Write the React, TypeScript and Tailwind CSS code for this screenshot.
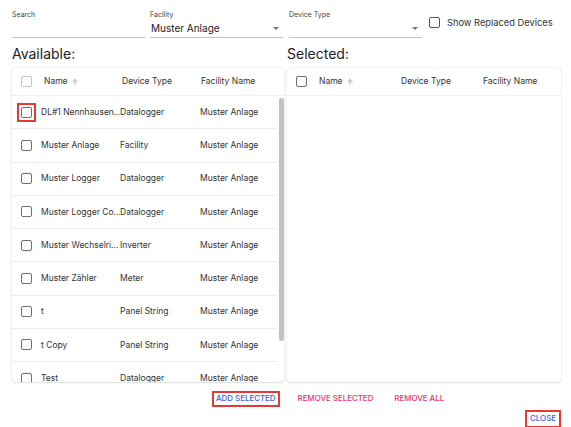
import { ArrowUp } from "lucide-react"

interface Device {
  name: string
  type: string
  facility: string
}

const devices: Device[] = [
  { name: 'DL#1 Nennhausen...', type: 'Datalogger', facility: 'Muster Anlage' },
  { name: 'Muster Anlage', type: 'Facility', facility: 'Muster Anlage' },
  { name: 'Muster Logger', type: 'Datalogger', facility: 'Muster Anlage' },
  { name: 'Muster Logger Co...', type: 'Datalogger', facility: 'Muster Anlage' },
  { name: 'Muster Wechselri...', type: 'Inverter', facility: 'Muster Anlage' },
  { name: 'Muster Zähler', type: 'Meter', facility: 'Muster Anlage' },
  { name: 't', type: 'Panel String', facility: 'Muster Anlage' },
  { name: 't Copy', type: 'Panel String', facility: 'Muster Anlage' },
  { name: 'Test', type: 'Datalogger', facility: 'Muster Anlage' },
]

const Checkbox = ({ light, focused }: { light?: boolean, focused?: boolean }) => {
  const box = (
    <span className={`block w-[11px] h-[11px] rounded-[2px] border-[1.5px] ${light ? 'border-[#c2c2c2]' : 'border-[#6f6f6f]'}`} />
  )
  if (!focused) return box
  return (
    <span className="-m-[4px] p-[2px] border-2 border-[#e53935] flex">{box}</span>
  )
}

const Caret = () => (
  <span className="w-0 h-0 border-l-[3px] border-r-[3px] border-t-[3px] border-l-transparent border-r-transparent border-t-[#757575] mr-[4px]" />
)

const Field = ({ label, value, width }: { label: string, value?: string, width: string }) => (
  <div className={`flex flex-col pt-[10px] ${width}`}>
    <div className="h-[9px] text-[7px] leading-[9px] text-[#444]">{label}</div>
    <div className="h-[19px] flex items-center justify-between border-b border-[#c4c4c4]">
      <span className="text-[10px] text-[#222] pl-[1px]">{value}</span>
      {label !== 'Search' && <Caret />}
    </div>
  </div>
)

const HeaderRow = ({ light, nameW, typeW }: { light?: boolean, nameW: string, typeW: string }) => (
  <div className="flex items-center h-[28px] border-b border-[#efefef] pl-[9px] text-[8.5px] text-[#333]">
    <Checkbox light={light} />
    <div className={`flex items-center pl-[12px] ${nameW}`}>
      <span>Name</span>
      <ArrowUp size={8} strokeWidth={2} className="ml-[3px] text-[#888]" />
    </div>
    <div className={typeW}>Device Type</div>
    <div>Facility Name</div>
  </div>
)

const App = () => {
  return (
    <div className="w-[571px] h-[427px] bg-white pl-3 pr-[10px] font-['Inter',sans-serif] text-[#333] overflow-hidden">
      <div className="flex items-start">
        <Field label="Search" width="w-[133px]" />
        <Field label="Facility" value="Muster Anlage" width="w-[133px] ml-[5px]" />
        <Field label="Device Type" width="w-[133px] ml-[6px]" />
        <div className="flex items-center ml-[7px] mt-[16px] h-[13px]">
          <span className="block w-[11px] h-[11px] rounded-[2px] border-[1.5px] border-[#555]" />
          <span className="ml-[7px] text-[9.3px] text-[#333]">Show Replaced Devices</span>
        </div>
      </div>

      <div className="grid grid-cols-[272px_274px] gap-x-[3px] mt-[6px]">
        <div className="h-[19px] text-[14px] leading-[19px] text-[#222] mb-[5px]">Available:</div>
        <div className="h-[19px] text-[14px] leading-[19px] text-[#222] mb-[5px]">Selected:</div>

        <div className="h-[314px] rounded-[4px] bg-white shadow-[0_0_2px_rgba(0,0,0,0.14),0_1px_2px_rgba(0,0,0,0.1)] overflow-hidden">
          <HeaderRow light nameW="w-[90px]" typeW="w-[79px]" />
          <div className="flex">
            <div className="w-[265px]">
              {devices.map((d, i) => (
                <div key={i} className="flex items-center h-[33.25px] border-b border-[#ececec] pl-[9px] text-[8.5px] text-[#333]">
                  <Checkbox focused={i === 0} />
                  <div className="w-[88px] pl-[9px] whitespace-nowrap overflow-hidden">{d.name}</div>
                  <div className="w-[80px] whitespace-nowrap">{d.type}</div>
                  <div className="whitespace-nowrap">{d.facility}</div>
                </div>
              ))}
            </div>
            <div className="w-[7px] pt-[2px] pl-[2px]">
              <div className="w-[5px] h-[243px] rounded-full bg-[#c1c1c4]" />
            </div>
          </div>
        </div>

        <div className="h-[314px] rounded-[4px] bg-white shadow-[0_0_2px_rgba(0,0,0,0.14),0_1px_2px_rgba(0,0,0,0.1)] overflow-hidden">
          <HeaderRow nameW="w-[94px]" typeW="w-[82px]" />
        </div>
      </div>

      <div className="flex items-center mt-[9px] ml-[200px] text-[7.9px] font-medium">
        <button className="h-[16px] px-[2px] border-2 border-[#e53935] text-[#3d5ee6] uppercase flex items-center">Add Selected</button>
        <button className="ml-[18px] text-[#e8336d] uppercase">Remove Selected</button>
        <button className="ml-[21px] text-[#e8336d] uppercase">Remove All</button>
      </div>
      <div className="flex justify-end mt-[3px]">
        <button className="h-[18px] px-[3px] border-2 border-[#e53935] text-[#3d5ee6] text-[7.9px] font-medium uppercase flex items-center">Close</button>
      </div>
    </div>
  )
}

export default App
